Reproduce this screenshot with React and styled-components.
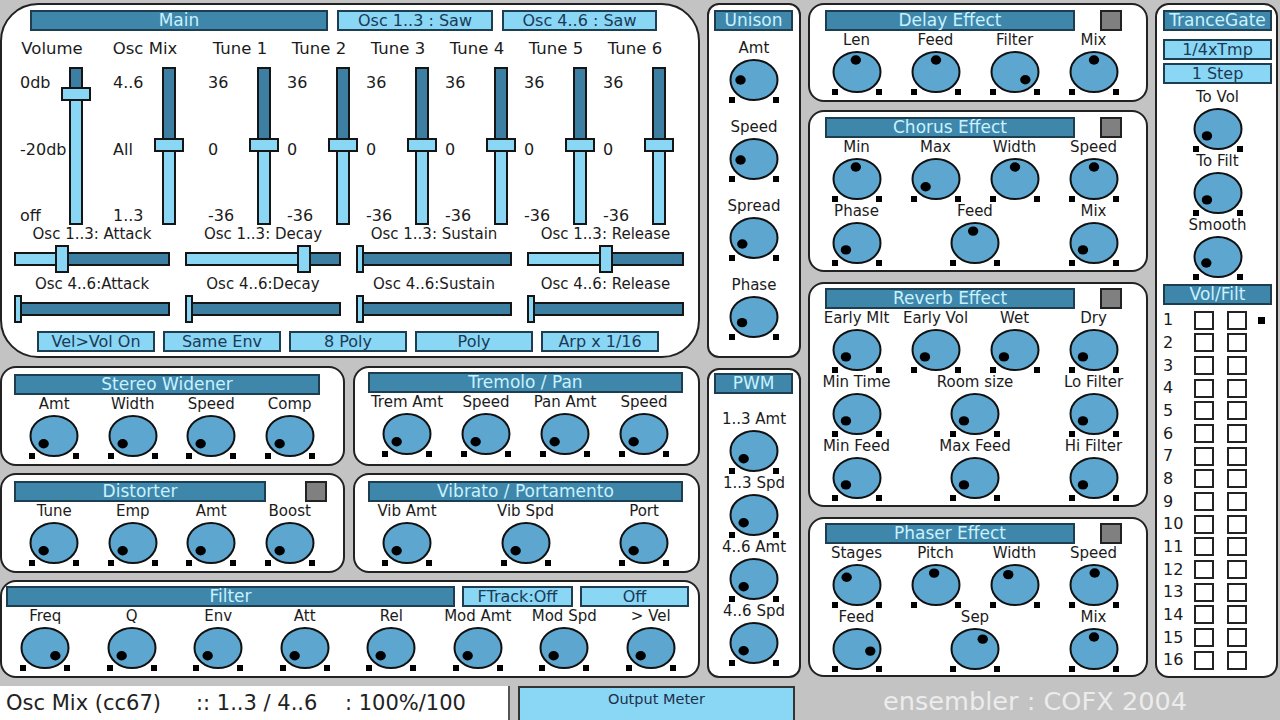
import React from "react";
import styled, { createGlobalStyle } from "styled-components";

const C = {
  dark: "#3f86ab",
  darkEdge: "#1d3e50",
  light: "#8ad6f5",
  lightText: "#1b3a55",
  knob: "#5ca6cf",
  track: "#3d7fa3",
  ink: "#1b1b1b",
  edge: "#222",
};

const GlobalStyle = createGlobalStyle`
  html, body { margin: 0; padding: 0; background: #c3c3c3; }
  body { font-family: "DejaVu Sans", Verdana, sans-serif; color: ${C.ink}; }
  * { box-sizing: border-box; }
`;

const Screen = styled.div`
  width: 1280px;
  height: 720px;
  overflow: hidden;
  background: #c3c3c3;
  display: flex;
  flex-direction: column;
`;

const Workspace = styled.div`
  display: flex;
  gap: 7px;
  padding-top: 3px;
`;

const Column = styled.div`
  width: ${(p) => p.$w}px;
  flex: none;
  display: flex;
  flex-direction: column;
`;

const PanelRow = styled.div`
  display: flex;
  gap: 8px;
  margin-top: ${(p) => p.$mt || 0}px;
`;

const Panel = styled.section`
  background: #fff;
  border: 2px solid ${C.edge};
  border-radius: ${(p) => p.$r || 16}px;
  height: ${(p) => p.$h}px;
  width: ${(p) => (p.$w ? `${p.$w}px` : "auto")};
  flex: none;
  margin-top: ${(p) => p.$mt || 0}px;
  padding-top: ${(p) => p.$pt || 5}px;
  display: flex;
  flex-direction: column;
`;

const TitleRow = styled.div`
  display: flex;
  align-items: center;
  gap: ${(p) => p.$gap || 0}px;
  padding-left: ${(p) => p.$left}px;
`;

const TitleBar = styled.div`
  width: ${(p) => p.$w}px;
  height: 21px;
  flex: none;
  background: ${C.dark};
  border: 2px solid ${C.darkEdge};
  color: #c9f2ff;
  font-size: 17px;
  line-height: 17px;
  text-align: center;
  white-space: nowrap;
  margin-top: ${(p) => p.$mt || 0}px;
`;

const LightButton = styled.div`
  width: ${(p) => p.$w}px;
  height: 21px;
  flex: none;
  background: ${C.light};
  border: 2px solid ${C.darkEdge};
  color: ${C.lightText};
  font-size: 16px;
  line-height: 17px;
  text-align: center;
  white-space: nowrap;
  margin-top: ${(p) => p.$mt || 0}px;
`;

const Toggle = styled.div`
  width: 22px;
  height: 21px;
  background: #808080;
  border: 2px solid ${C.edge};
`;

/* ---------- knobs ---------- */

const KnobArt = styled.svg`
  display: block;
  margin-top: 2px;
`;

const Knob = ({ angle }) => {
  const r = (angle * Math.PI) / 180;
  const x = 25 + 13.5 * Math.sin(r);
  const y = 21 - 12 * Math.cos(r);
  return (
    <KnobArt width="50" height="44" viewBox="0 0 50 44">
      <ellipse cx="25" cy="21" rx="23.5" ry="20" fill={C.knob} stroke="#111" strokeWidth="2" />
      <ellipse cx={x} cy={y} rx="5.2" ry="4.7" fill="#000" />
      <rect x="0" y="38" width="6" height="6" fill="#000" />
      <rect x="44" y="38" width="6" height="6" fill="#000" />
    </KnobArt>
  );
};

const Cell = styled.div`
  width: ${(p) => p.$w}px;
  flex: none;
  display: flex;
  flex-direction: column;
  align-items: center;
`;

const KnobLabel = styled.div`
  font-size: 15px;
  line-height: 18px;
  height: 18px;
  white-space: nowrap;
`;

const KnobCell = ({ label, angle, width }) => (
  <Cell $w={width}>
    <KnobLabel>{label}</KnobLabel>
    <Knob angle={angle} />
  </Cell>
);

const KnobRow = styled.div`
  display: flex;
  justify-content: space-between;
  margin-left: ${(p) => p.$left}px;
  width: ${(p) => p.$span}px;
`;

const KnobStack = styled.div`
  display: flex;
  flex-direction: column;
  align-items: center;
  gap: ${(p) => p.$gap || 0}px;
  margin-top: ${(p) => p.$mt || 0}px;
  width: ${(p) => (p.$w ? `${p.$w}px` : "auto")};
`;

const FxPanel = ({ title, titleLeft, titleWidth, toggleGap, cellLeft, cell = 79, count = 4, rows, h, w, mt, pt, r }) => (
  <Panel $h={h} $w={w} $mt={mt} $pt={pt} $r={r}>
    <TitleRow $left={titleLeft} $gap={toggleGap}>
      <TitleBar $w={titleWidth}>{title}</TitleBar>
      {toggleGap ? <Toggle /> : null}
    </TitleRow>
    {rows.map((row, i) => (
      <KnobRow key={i} $left={cellLeft} $span={cell * count}>
        {row.map((k, j) => (
          <KnobCell key={j} label={k[0]} angle={k[1]} width={cell} />
        ))}
      </KnobRow>
    ))}
  </Panel>
);

/* ---------- main panel ---------- */

const FaderGrid = styled.div`
  display: flex;
  padding-left: 18px;
  margin-top: 9px;
`;

const FaderCol = styled.div`
  width: ${(p) => p.$w}px;
  flex: none;
`;

const FaderTitle = styled.div`
  width: 64px;
  font-size: 16.5px;
  line-height: 18px;
  white-space: nowrap;
  display: flex;
  justify-content: center;
`;

const FaderBody = styled.div`
  display: flex;
  height: 158px;
  margin-top: 9px;
`;

const Marks = styled.div`
  width: 49px;
  display: flex;
  flex-direction: column;
  justify-content: space-between;
  padding-top: 7px;
  font-size: 16px;
  line-height: 18px;
`;

const VTrack = styled.div`
  position: relative;
  width: 14px;
  height: 158px;
  border: 2px solid #151515;
  background: linear-gradient(
    to bottom,
    ${C.track} 0,
    ${C.track} ${(p) => p.$pos}px,
    ${C.light} ${(p) => p.$pos}px
  );
`;

const VThumb = styled.div`
  position: absolute;
  left: -10px;
  top: ${(p) => p.$pos - 2}px;
  width: 30px;
  height: 14px;
  background: ${C.light};
  border: 2px solid #151515;
`;

const EnvGrid = styled.div`
  display: grid;
  grid-template-columns: 156px 156px 156px 157px;
  column-gap: 15px;
  row-gap: 3px;
  margin-left: 12px;
  margin-top: 1px;
`;

const EnvCell = styled.div`
  display: flex;
  flex-direction: column;
`;

const EnvLabel = styled.div`
  font-size: 15px;
  line-height: 16px;
  text-align: center;
  white-space: nowrap;
`;

const HSlider = styled.div`
  position: relative;
  height: 28px;
  padding-top: 7px;
  margin-top: 3px;
`;

const HTrack = styled.div`
  height: 14px;
  border: 2px solid #151515;
  background: linear-gradient(
    to right,
    ${C.light} 0,
    ${C.light} ${(p) => p.$pos}px,
    ${C.track} ${(p) => p.$pos}px
  );
`;

const HThumb = styled.div`
  position: absolute;
  top: 0;
  left: ${(p) => p.$pos}px;
  width: ${(p) => p.$w}px;
  height: 28px;
  background: ${C.light};
  border: 2px solid #151515;
`;

const ButtonRow = styled.div`
  display: flex;
  gap: ${(p) => p.$gap}px;
  margin-left: ${(p) => p.$left}px;
  margin-top: ${(p) => p.$mt || 0}px;
`;

const faders = [
  { title: "Volume", marks: ["0db", "-20db", "off"], pos: 20, col: 93 },
  { title: "Osc Mix", marks: ["4..6", "All", "1..3"], pos: 71, col: 95 },
  ...[1, 2, 3, 4, 5, 6].map((n) => ({
    title: `Tune ${n}`,
    marks: ["36", "0", "-36"],
    pos: 71,
    col: n === 6 ? 64 : 79,
  })),
];

const envs = [
  ["Osc 1..3: Attack", 41, 14],
  ["Osc 1..3: Decay", 112, 14],
  ["Osc 1..3: Sustain", 0, 8],
  ["Osc 1..3: Release", 72, 14],
  ["Osc 4..6:Attack", 0, 8],
  ["Osc 4..6:Decay", 0, 8],
  ["Osc 4..6:Sustain", 0, 8],
  ["Osc 4..6: Release", 0, 8],
];

const MainPanel = () => (
  <Panel $h={355} $r={38}>
    <TitleRow $left={28} $gap={9}>
      <TitleBar $w={298}>Main</TitleBar>
      <LightButton $w={156}>Osc 1..3 : Saw</LightButton>
      <LightButton $w={155}>Osc 4..6 : Saw</LightButton>
    </TitleRow>
    <FaderGrid>
      {faders.map((f) => (
        <FaderCol key={f.title} $w={f.col}>
          <FaderTitle>{f.title}</FaderTitle>
          <FaderBody>
            <Marks>
              {f.marks.map((m) => (
                <span key={m}>{m}</span>
              ))}
            </Marks>
            <VTrack $pos={f.pos}>
              <VThumb $pos={f.pos} />
            </VTrack>
          </FaderBody>
        </FaderCol>
      ))}
    </FaderGrid>
    <EnvGrid>
      {envs.map(([label, pos, w]) => (
        <EnvCell key={label}>
          <EnvLabel>{label}</EnvLabel>
          <HSlider>
            <HTrack $pos={pos} />
            <HThumb $pos={pos} $w={w} />
          </HSlider>
        </EnvCell>
      ))}
    </EnvGrid>
    <ButtonRow $gap={8} $left={35} $mt={8}>
      {["Vel>Vol On", "Same Env", "8 Poly", "Poly", "Arp x 1/16"].map((b) => (
        <LightButton key={b} $w={118}>
          {b}
        </LightButton>
      ))}
    </ButtonRow>
  </Panel>
);

/* ---------- filter ---------- */

const filterKnobs = [
  ["Freq", 130],
  ["Q", -130],
  ["Env", -130],
  ["Att", -130],
  ["Rel", -130],
  ["Mod Amt", -130],
  ["Mod Spd", -130],
  ["> Vel", -130],
];

const FilterPanel = () => (
  <Panel $h={98} $mt={7} $pt={4} $r={16}>
    <TitleRow $left={4} $gap={7}>
      <TitleBar $w={449}>Filter</TitleBar>
      <LightButton $w={111}>FTrack:Off</LightButton>
      <LightButton $w={109}>Off</LightButton>
    </TitleRow>
    <KnobRow $left={0} $span={692}>
      {filterKnobs.map((k) => (
        <KnobCell key={k[0]} label={k[0]} angle={k[1]} width={86.5} />
      ))}
    </KnobRow>
  </Panel>
);

/* ---------- tall narrow panels ---------- */

const NarrowPanel = ({ title, knobs, h, mt, pt, gap, stackTop }) => (
  <Panel $h={h} $mt={mt} $pt={pt} $r={12}>
    <TitleRow $left={5}>
      <TitleBar $w={79}>{title}</TitleBar>
    </TitleRow>
    <KnobStack $gap={gap} $mt={stackTop}>
      {knobs.map((k) => (
        <KnobCell key={k[0]} label={k[0]} angle={k[1]} width={80} />
      ))}
    </KnobStack>
  </Panel>
);

/* ---------- trance gate ---------- */

const GateBody = styled.div`
  display: flex;
  flex-direction: column;
  padding-left: 6px;
`;

const StepList = styled.div`
  margin-top: 4px;
  display: flex;
  flex-direction: column;
`;

const StepRow = styled.div`
  height: 22.67px;
  display: flex;
  align-items: center;
`;

const StepNum = styled.span`
  width: 31px;
  font-size: 16px;
  line-height: 18px;
`;

const StepBox = styled.span`
  width: 20px;
  height: 19px;
  border: 2px solid ${C.edge};
  background: #fff;
  margin-right: ${(p) => p.$mr}px;
`;

const StepMark = styled.span`
  width: 7px;
  height: 7px;
  background: #000;
`;

const GatePanel = () => (
  <Panel $h={675} $r={14}>
    <GateBody>
      <TitleBar $w={109}>TranceGate</TitleBar>
      <LightButton $w={109} $mt={8}>
        1/4xTmp
      </LightButton>
      <LightButton $w={109} $mt={3}>
        1 Step
      </LightButton>
      <KnobStack $mt={4} $w={109}>
        <KnobCell label="To Vol" angle={-125} width={80} />
        <KnobCell label="To Filt" angle={-125} width={80} />
        <KnobCell label="Smooth" angle={-120} width={80} />
      </KnobStack>
      <TitleBar $w={109} $mt={4}>
        Vol/Filt
      </TitleBar>
      <StepList>
        {Array.from({ length: 16 }, (_, i) => (
          <StepRow key={i}>
            <StepNum>{i + 1}</StepNum>
            <StepBox $mr={13} />
            <StepBox $mr={11} />
            {i === 0 ? <StepMark /> : null}
          </StepRow>
        ))}
      </StepList>
    </GateBody>
  </Panel>
);

/* ---------- status bar ---------- */

const StatusBar = styled.footer`
  display: flex;
  height: 34px;
  margin-top: 8px;
`;

const Readout = styled.div`
  width: 510px;
  background: #fff;
  border-right: 2px solid #555;
  display: flex;
  align-items: center;
  padding-left: 6px;
  font-size: 21px;
  color: #222;
`;

const ReadoutPart = styled.span`
  width: ${(p) => (p.$w ? `${p.$w}px` : "auto")};
  white-space: pre;
`;

const Meter = styled.div`
  margin-left: 8px;
  width: 277px;
  background: ${C.light};
  border: 2px solid #333;
  border-bottom: none;
  text-align: center;
  font-size: 14.5px;
  line-height: 18px;
  padding-top: 2px;
  color: #1d2f4a;
`;

const Credit = styled.div`
  margin-left: 88px;
  font-size: 25.6px;
  line-height: 30px;
  color: #ececec;
  white-space: nowrap;
`;

/* ---------- page ---------- */

const BL = -130;

export default function App() {
  return (
    <Screen>
      <GlobalStyle />
      <Workspace>
        <Column $w={700}>
          <MainPanel />
          <PanelRow $mt={8}>
            <FxPanel
              title="Stereo Widener"
              titleLeft={12}
              titleWidth={306}
              cellLeft={13}
              cell={78.5}
              h={100}
              w={345}
              pt={6}
              rows={[[["Amt", BL], ["Width", BL], ["Speed", BL], ["Comp", BL]]]}
            />
            <FxPanel
              title="Tremolo / Pan"
              titleLeft={13}
              titleWidth={315}
              cellLeft={12.5}
              h={100}
              w={347}
              pt={4}
              rows={[[["Trem Amt", BL], ["Speed", BL], ["Pan Amt", BL], ["Speed", BL]]]}
            />
          </PanelRow>
          <PanelRow $mt={7}>
            <FxPanel
              title="Distorter"
              titleLeft={12}
              titleWidth={252}
              toggleGap={39}
              cellLeft={13}
              cell={78.5}
              h={100}
              w={345}
              pt={6}
              rows={[[["Tune", BL], ["Emp", BL], ["Amt", BL], ["Boost", BL]]]}
            />
            <FxPanel
              title="Vibrato / Portamento"
              titleLeft={13}
              titleWidth={315}
              cellLeft={12.5}
              h={100}
              w={347}
              pt={6}
              rows={[[["Vib Amt", BL], ["Vib Spd", BL], ["Port", BL]]]}
            />
          </PanelRow>
          <FilterPanel />
        </Column>

        <Column $w={94}>
          <NarrowPanel
            title="Unison"
            h={355}
            pt={5}
            gap={15}
            stackTop={8}
            knobs={[["Amt", -90], ["Speed", -95], ["Spread", -120], ["Phase", -118]]}
          />
          <NarrowPanel
            title="PWM"
            h={310}
            mt={10}
            pt={3}
            gap={0}
            stackTop={16}
            knobs={[["1..3 Amt", BL], ["1..3 Spd", BL], ["4..6 Amt", BL], ["4..6 Spd", BL]]}
          />
        </Column>

        <Column $w={340}>
          <FxPanel
            title="Delay Effect"
            titleLeft={15}
            titleWidth={250}
            toggleGap={25}
            cellLeft={7}
            h={99}
            pt={5}
            rows={[[["Len", -5], ["Feed", 0], ["Filter", 130], ["Mix", 0]]]}
          />
          <FxPanel
            title="Chorus Effect"
            titleLeft={15}
            titleWidth={250}
            toggleGap={25}
            cellLeft={7}
            h={162}
            mt={8}
            pt={5}
            rows={[
              [["Min", -5], ["Max", -130], ["Width", 0], ["Speed", 0]],
              [["Phase", -125], ["Feed", -8], ["Mix", -125]],
            ]}
          />
          <FxPanel
            title="Reverb Effect"
            titleLeft={15}
            titleWidth={250}
            toggleGap={25}
            cellLeft={7}
            h={225}
            mt={10}
            pt={4}
            rows={[
              [["Early Mlt", -125], ["Early Vol", -125], ["Wet", -125], ["Dry", -125]],
              [["Min Time", -125], ["Room size", -125], ["Lo Filter", -125]],
              [["Min Feed", -125], ["Max Feed", -125], ["Hi Filter", -125]],
            ]}
          />
          <FxPanel
            title="Phaser Effect"
            titleLeft={15}
            titleWidth={250}
            toggleGap={25}
            cellLeft={7}
            h={160}
            mt={10}
            pt={4}
            rows={[
              [["Stages", -50], ["Pitch", -8], ["Width", -30], ["Speed", 3]],
              [["Feed", 100], ["Sep", 35], ["Mix", 0]],
            ]}
          />
        </Column>

        <Column $w={123}>
          <GatePanel />
        </Column>
      </Workspace>

      <StatusBar>
        <Readout>
          <ReadoutPart $w={190}>Osc Mix (cc67)</ReadoutPart>
          <ReadoutPart $w={149}>:: 1..3 / 4..6</ReadoutPart>
          <ReadoutPart>: 100%/100</ReadoutPart>
        </Readout>
        <Meter>Output Meter</Meter>
        <Credit>ensembler : COFX 2004</Credit>
      </StatusBar>
    </Screen>
  );
}
